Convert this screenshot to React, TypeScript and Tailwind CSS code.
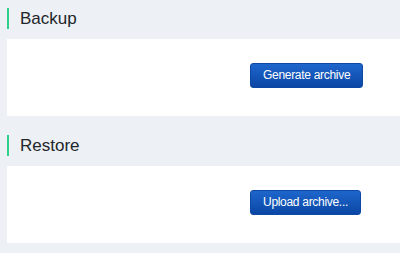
const sections = [
  { title: "Backup", action: "Generate archive" },
  { title: "Restore", action: "Upload archive..." },
];

export default function App() {
  return (
    <div
      className="h-[253px] w-[400px] overflow-hidden bg-[#edf0f5]"
      style={{ fontFamily: '"Liberation Sans", Arial, sans-serif' }}
    >
      <div className="flex flex-col gap-[11px]">
        {sections.map((s) => (
          <section key={s.title}>
            <div className="flex h-[39px] items-start pl-[7px] pt-[8px]">
              <span className="h-[21px] w-[2px] bg-[#2fcf8c]" />
              <h2 className="ml-[11px] mt-[2px] text-[17px] leading-[17px] text-[#222629]">{s.title}</h2>
            </div>
            <div className="ml-[7px] h-[77px] bg-white pl-[243px] pt-[23px]">
              <button className="h-[25px] min-w-[111px] rounded-[3px] border border-[#0d49a3] bg-gradient-to-b from-[#1e66cc] to-[#0b47a5] px-[12px] text-[12px] tracking-[-0.3px] text-white">
                {s.action}
              </button>
            </div>
          </section>
        ))}
      </div>
    </div>
  );
}
